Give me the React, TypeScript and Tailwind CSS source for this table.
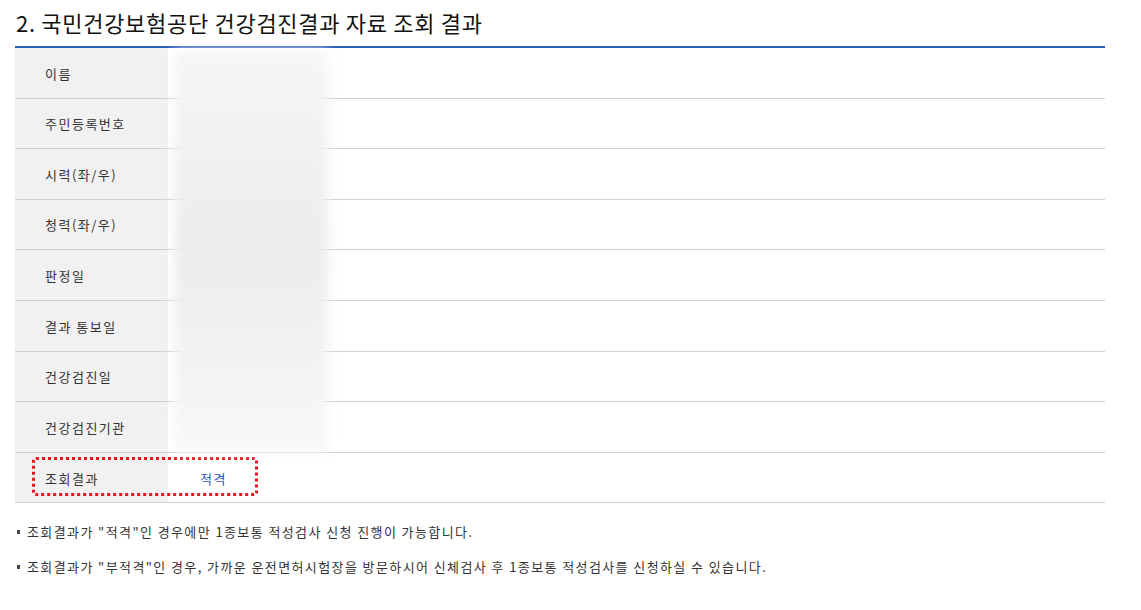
const rows = [
  "이름",
  "주민등록번호",
  "시력(좌/우)",
  "청력(좌/우)",
  "판정일",
  "결과 통보일",
  "건강검진일",
  "건강검진기관",
];

export default function App() {
  return (
    <div
      className="bg-white w-[1141px] h-[610px] pl-[15px] pt-[6px] text-[#333]"
      style={{ fontFamily: '"Noto Sans CJK KR", "Noto Sans", sans-serif' }}
    >
      <h2 className="text-[22px] leading-[32px] text-[#111] pl-[1px] tracking-[0.7px]">
        2. 국민건강보험공단 건강검진결과 자료 조회 결과
      </h2>
      <div className="w-[1090px] mt-[8px] border-t-2 border-[#2b5fb8]">
        <div className="relative">
          {rows.map((label) => (
            <div key={label} className="flex h-[50.6px] border-b border-[#cfcfcf]">
              <div className="w-[153px] bg-[#f1f1f1] flex items-center pl-[30px] text-[13px] tracking-[1.5px] pt-[1px]">{label}</div>
              <div className="flex-1" />
            </div>
          ))}
          <div className="relative flex h-[50.6px] border-b border-[#cfcfcf]">
            <div className="w-[153px] bg-[#f1f1f1] flex items-center pl-[30px] text-[13px] tracking-[1.5px] pt-[3px]">조회결과</div>
            <div className="flex-1 flex items-center pl-[32px] text-[13px] tracking-[1.5px] text-[#2d56b6] pt-[3px]">적격</div>
            <div className="absolute left-[17px] top-[4px] w-[226px] h-[39px] border-[3px] border-dotted border-[#e8141b] rounded-[4px]" />
          </div>
          <div className="absolute left-[159px] top-[2px] w-[154px] h-[402px] bg-gradient-to-b from-[#f6f6f6] via-[#ececec] to-[#f8f8f8] blur-[6px]" />
        </div>
      </div>
      <ul className="mt-[19px] text-[13px] text-[#333] space-y-[16px] tracking-[1.4px]">
        <li className="flex items-center gap-[7px] leading-[19px]">
          <span className="w-[3px] h-[4px] bg-[#444] ml-[2px]" />
          조회결과가 "적격"인 경우에만 1종보통 적성검사 신청 진행이 가능합니다.
        </li>
        <li className="flex items-center gap-[7px] leading-[19px]">
          <span className="w-[3px] h-[4px] bg-[#444] ml-[2px]" />
          조회결과가 "부적격"인 경우, 가까운 운전면허시험장을 방문하시어 신체검사 후 1종보통 적성검사를 신청하실 수 있습니다.
        </li>
      </ul>
    </div>
  );
}
